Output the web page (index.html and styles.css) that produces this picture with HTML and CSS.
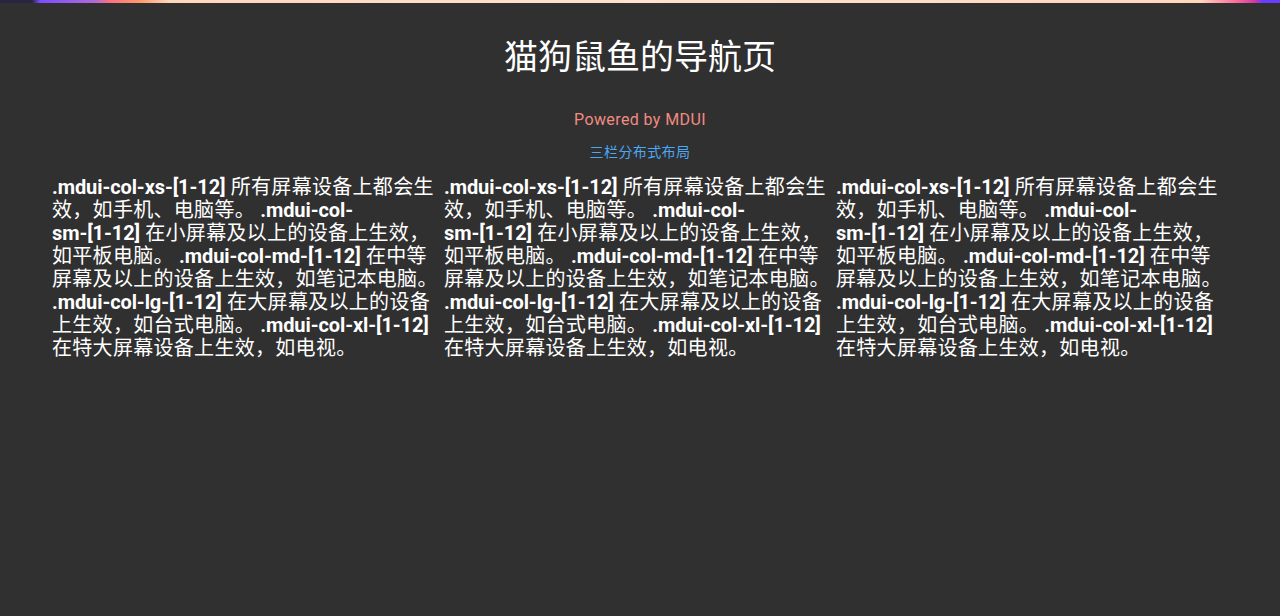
FILE: index.html
```html
<!DOCTYPE html>
<html lang="zh-CN">
<head>
<meta charset="utf-8">
<title>猫狗鼠鱼的导航页</title>
<link rel="stylesheet" href="styles.css">
</head>
<body>
<div class="topbar"></div>
<div class="container">
  <h1 class="title">猫狗鼠鱼的导航页</h1>
  <p class="powered">Powered by MDUI</p>
  <p class="subtitle">三栏分布式布局</p>
  <div class="row">
    <div class="col"><b class="cls">.mdui-col-<span class="nw">xs-[1-12]</span></b> 所有屏幕设备上都会生效，如手机、电脑等。 <b class="cls">.mdui-col-<span class="nw">sm-[1-12]</span></b> 在小屏幕及以上的设备上生效，如平板电脑。 <b class="cls">.mdui-col-<span class="nw">md-[1-12]</span></b> 在中等屏幕及以上的设备上生效，如笔记本电脑。 <b class="cls">.mdui-col-<span class="nw">lg-[1-12]</span></b> 在大屏幕及以上的设备上生效，如台式电脑。 <b class="cls">.mdui-col-<span class="nw">xl-[1-12]</span></b> 在特大屏幕设备上生效，如电视。</div>
    <div class="col"><b class="cls">.mdui-col-<span class="nw">xs-[1-12]</span></b> 所有屏幕设备上都会生效，如手机、电脑等。 <b class="cls">.mdui-col-<span class="nw">sm-[1-12]</span></b> 在小屏幕及以上的设备上生效，如平板电脑。 <b class="cls">.mdui-col-<span class="nw">md-[1-12]</span></b> 在中等屏幕及以上的设备上生效，如笔记本电脑。 <b class="cls">.mdui-col-<span class="nw">lg-[1-12]</span></b> 在大屏幕及以上的设备上生效，如台式电脑。 <b class="cls">.mdui-col-<span class="nw">xl-[1-12]</span></b> 在特大屏幕设备上生效，如电视。</div>
    <div class="col"><b class="cls">.mdui-col-<span class="nw">xs-[1-12]</span></b> 所有屏幕设备上都会生效，如手机、电脑等。 <b class="cls">.mdui-col-<span class="nw">sm-[1-12]</span></b> 在小屏幕及以上的设备上生效，如平板电脑。 <b class="cls">.mdui-col-<span class="nw">md-[1-12]</span></b> 在中等屏幕及以上的设备上生效，如笔记本电脑。 <b class="cls">.mdui-col-<span class="nw">lg-[1-12]</span></b> 在大屏幕及以上的设备上生效，如台式电脑。 <b class="cls">.mdui-col-<span class="nw">xl-[1-12]</span></b> 在特大屏幕设备上生效，如电视。</div>
  </div>
</div>
</body>
</html>
```
FILE: styles.css
```css
html, body {
  margin: 0;
  padding: 0;
  background: #303030;
  color: #fff;
  font-family: Roboto, "Noto Sans CJK SC", sans-serif;
  height: 100%;
}
.topbar {
  height: 3px;
  background: linear-gradient(90deg, #2b2440 0, #2b2440 32px, #7c4dff 40px, #b06ad8 95px, #ff6f7f 110px, #ff9a6a 140px, #ffd7bd 170px, #ffe2cf 50%, #ffd7bd 1200px, #ff6f9a 1235px, #d13aa0 1255px, #6a3cff 1262px, #6a3cff 100%);
}
.container {
  width: 1176px;
  margin: 0 auto;
}
.title {
  margin: 32px 0 0;
  text-align: center;
  font-weight: 400;
  font-size: 34px;
  line-height: 44px;
}
.powered {
  margin: 31px 0 0;
  text-align: center;
  color: #f28b82;
  font-size: 16px;
  line-height: 20px;
  letter-spacing: 0.4px;
}
.subtitle {
  margin: 13px 0 0;
  text-align: center;
  color: #4aa8f5;
  font-size: 14px;
  line-height: 18px;
  letter-spacing: 0.4px;
}
.row {
  display: grid;
  grid-template-columns: repeat(3, 392px);
  margin-top: 15px;
}
.col {
  padding-right: 4px;
  font-size: 20px;
  line-height: 23px;
  font-weight: 400;
  letter-spacing: 0.3px;
}
.cls {
  font-weight: 700;
  letter-spacing: -0.1px;
}
.nw {
  white-space: nowrap;
}
```
